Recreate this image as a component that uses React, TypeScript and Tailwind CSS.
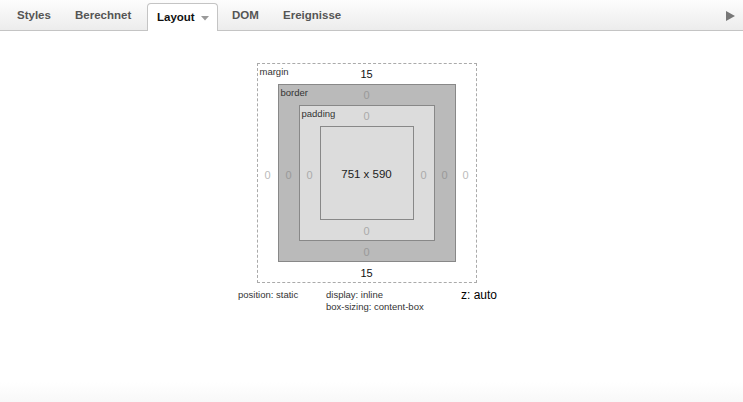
import { ReactNode } from 'react'

const tabs = [
  { name: 'Styles', cls: 'w-[58px] pl-[12px]' },
  { name: 'Berechnet', cls: 'w-[84px] pl-[12px]' },
  { name: 'Layout', cls: '' },
  { name: 'DOM', cls: 'w-[51px] pl-[14px]' },
  { name: 'Ereignisse', cls: 'pl-[14px]' },
]

function Layer({
  label,
  values,
  className,
  edgeClass,
  sideClass,
  children,
}: {
  label: string
  values: [string, string, string, string]
  className: string
  edgeClass: string
  sideClass: string
  children: ReactNode
}) {
  const [top, right, bottom, left] = values
  return (
    <div className={`relative grid grid-cols-[20px_auto_20px] grid-rows-[20px_auto_20px] ${className}`}>
      <span className="absolute left-[2px] top-[3px] text-[9.5px] leading-none text-[#333]">{label}</span>
      <div />
      <div className={`flex items-center justify-center text-[11px] ${edgeClass}`}>{top}</div>
      <div />
      <div className={`flex items-center justify-center pt-[4px] text-[11px] ${sideClass}`}>{left}</div>
      {children}
      <div className={`flex items-center justify-center pt-[4px] text-[11px] ${sideClass}`}>{right}</div>
      <div />
      <div className={`flex items-center justify-center pt-[3px] text-[11px] ${edgeClass}`}>{bottom}</div>
      <div />
    </div>
  )
}

export default function App() {
  return (
    <div className="flex h-[402px] w-[743px] flex-col bg-white font-['Liberation_Sans',Arial,sans-serif]">
      <div className="relative flex h-[31px] items-end border-b border-[#c4c4c4] bg-gradient-to-b from-[#fdfdfd] to-[#ececec] pl-[5px]">
        {tabs.map((t) =>
          t.name === 'Layout' ? (
            <div
              key={t.name}
              className="-mb-px flex h-[28px] w-[71px] items-center rounded-t-[4px] border border-b-0 border-[#c4c4c4] bg-white pl-[9px] text-[11.5px] font-bold text-[#111]"
            >
              Layout
              <svg width="8" height="5" viewBox="0 0 8 5" className="ml-[6px] mt-px">
                <path d="M0 0 L8 0 L4 4.5 Z" fill="#9a9a9a" />
              </svg>
            </div>
          ) : (
            <div key={t.name} className={`flex h-[28px] items-center text-[11.5px] font-bold text-[#555] ${t.cls}`}>
              {t.name}
            </div>
          )
        )}
        <svg width="9" height="10" viewBox="0 0 9 10" className="absolute right-[8px] top-[11px]">
          <path d="M0 0 L9 5 L0 10 Z" fill="#777" />
        </svg>
      </div>

      <div className="flex flex-1 flex-col items-center pt-[32px]">
        <div className="ml-[-10px]">
          <Layer
            label="margin"
            values={['15', '0', '15', '0']}
            className="w-[220px] border border-dashed border-[#aaa] bg-white"
            edgeClass="text-[#111]"
            sideClass="text-[#bbb]"
          >
            <Layer
              label="border"
              values={['0', '0', '0', '0']}
              className="border border-[#888] bg-[#bababa]"
              edgeClass="text-[#999]"
              sideClass="text-[#999]"
            >
              <Layer
                label="padding"
                values={['0', '0', '0', '0']}
                className="border border-[#888] bg-[#dcdcdc]"
                edgeClass="text-[#aaa]"
                sideClass="text-[#aaa]"
              >
                <div className="flex h-[94px] w-[94px] items-center justify-center border border-[#888] bg-[#dcdcdc] pt-[4px] text-[11.5px] text-[#222]">
                  751 x 590
                </div>
              </Layer>
            </Layer>
          </Layer>
        </div>

        <div className="ml-[3px] mt-[6px] flex w-[270px] items-start text-[9.5px] leading-[12px] text-[#333]">
          <div className="w-[88px]">position: static</div>
          <div className="w-[135px]">
            <div>display: inline</div>
            <div>box-sizing: content-box</div>
          </div>
          <div className="mt-[-1px] text-[12px] leading-[14px] text-black">z: auto</div>
        </div>
      </div>

      <div className="h-[20px] bg-gradient-to-b from-white to-[#f8f8f8]" />
    </div>
  )
}
